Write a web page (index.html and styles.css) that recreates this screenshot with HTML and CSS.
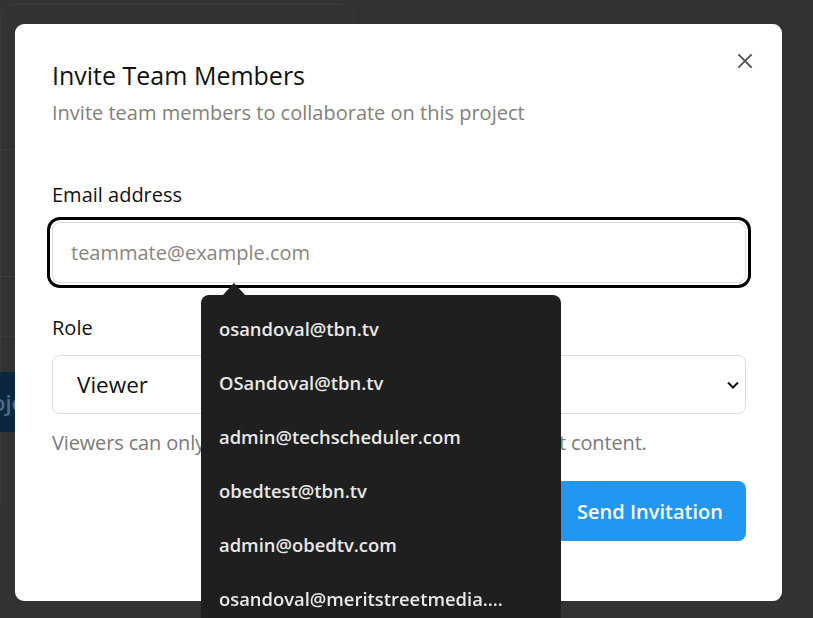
FILE: index.html
```html
<!DOCTYPE html>
<html lang="en">
<head>
<meta charset="utf-8">
<title>Invite Team Members</title>
<link rel="stylesheet" href="styles.css">
</head>
<body>
<div class="page">
  <div class="bg-card">
    <div class="bg-row bg-row-1"></div>
    <div class="bg-row bg-row-2"></div>
    <div class="bg-row bg-row-3"></div>
    <div class="bg-btn"><span>Projects</span></div>
  </div>
</div>

<div class="modal" role="dialog" aria-labelledby="invite-title">
  <button class="close" aria-label="Close">
    <svg width="16" height="16" viewBox="0 0 16 16"><path d="M2 2 L14 14 M14 2 L2 14" stroke="#555" stroke-width="1.8" fill="none" stroke-linecap="square"/></svg>
  </button>
  <h2 id="invite-title" class="title">Invite Team Members</h2>
  <p class="subtitle">Invite team members to collaborate on this project</p>

  <div class="field field-email">
    <label class="label" for="email">Email address</label>
    <input id="email" class="input focused" type="email" placeholder="teammate@example.com">
  </div>

  <div class="field field-role">
    <label class="label" for="role">Role</label>
    <div class="select">
      <span class="select-value">Viewer</span>
      <svg class="chevron" width="14" height="10" viewBox="0 0 14 10"><path d="M2 2.5 L7 7.5 L12 2.5" stroke="#111" stroke-width="2" fill="none"/></svg>
    </div>
    <p class="help">Viewers can only view the project details but cannot edit content.</p>
  </div>

  <div class="actions">
    <button class="btn btn-cancel">Cancel</button>
    <button class="btn btn-primary">Send Invitation</button>
  </div>
</div>

<div class="suggest">
  <div class="suggest-arrow"></div>
  <ul class="suggest-list">
    <li>osandoval@tbn.tv</li>
    <li>OSandoval@tbn.tv</li>
    <li>admin@techscheduler.com</li>
    <li>obedtest@tbn.tv</li>
    <li>admin@obedtv.com</li>
    <li>osandoval@meritstreetmedia.com</li>
  </ul>
</div>
</body>
</html>
```

FILE: styles.css
```css
* { box-sizing: border-box; }
html, body {
  margin: 0;
  height: 100%;
  overflow: hidden;
}
body {
  background: #323232;
  font-family: "Open Sans", "Noto Sans", sans-serif;
}

/* dimmed page behind the modal */
.page {
  padding-top: 4px;
}
.bg-card {
  width: 354px;
  height: 500px;
  border: 1px solid #3a3a3a;
  border-bottom: none;
  border-radius: 12px 12px 0 0;
  padding-top: 144px;
}
.bg-row {
  width: 100%;
  border-top: 1px solid #3d3d3d;
}
.bg-row-1 { height: 127px; }
.bg-row-2 { height: 60px; }
.bg-row-3 { height: 36px; border-top: 1px solid #393939; }
.bg-btn {
  width: 120px;
  height: 60px;
  margin-left: -40px;
  background: #0b2740;
  color: #4f6a86;
  font-size: 22px;
  font-weight: 600;
  display: flex;
  align-items: center;
  padding-left: 8px;
}

/* modal */
.modal {
  position: fixed;
  left: 15px;
  top: 24px;
  width: 767px;
  height: 577px;
  background: #fff;
  border-radius: 9px;
  padding: 35px 36px 0 37px;
  display: flex;
  flex-direction: column;
}
.close {
  position: absolute;
  right: 27px;
  top: 27px;
  width: 20px;
  height: 20px;
  padding: 0;
  border: 0;
  background: none;
  display: flex;
  align-items: center;
  justify-content: center;
}
.title {
  margin: 0;
  font-size: 25px;
  line-height: 32px;
  font-weight: 500;
  color: #111;
}
.subtitle {
  margin: 8px 0 0;
  font-size: 20px;
  line-height: 28px;
  color: #857f7a;
}
.field {
  display: flex;
  flex-direction: column;
}
.field-email { margin-top: 54px; }
.field-role { margin-top: 31px; }
.label {
  font-size: 20px;
  line-height: 28px;
  font-weight: 500;
  color: #111;
}
.input {
  margin-top: 13px;
  width: 694px;
  height: 61px;
  border: 1px solid #dcdcdc;
  border-radius: 8px;
  padding: 0 18px;
  font-family: inherit;
  font-size: 20px;
  color: #111;
}
.input::placeholder { color: #8a847f; }
.input.focused {
  outline: 3px solid #000;
  outline-offset: 2px;
}
.select {
  margin-top: 13px;
  width: 694px;
  height: 59px;
  border: 1px solid #dcdcdc;
  border-radius: 8px;
  padding: 0 5px 0 24px;
  display: flex;
  align-items: center;
  justify-content: space-between;
}
.select-value {
  font-size: 22.5px;
  color: #111;
}
.chevron { margin-top: 1px; }
.help {
  margin: 15px 0 0;
  font-size: 20px;
  line-height: 28px;
  color: #7a7a7a;
  letter-spacing: -0.15px;
}
.actions {
  margin-top: 24px;
  display: flex;
  justify-content: flex-end;
  gap: 12px;
}
.btn {
  height: 60px;
  border-radius: 8px;
  border: 0;
  font-family: inherit;
  font-size: 20px;
  font-weight: 600;
  padding: 0 24px;
}
.btn-cancel {
  background: #f1f1f1;
  color: #333;
}
.btn-primary {
  background: #2196f3;
  color: #fff;
  width: 192px;
  padding: 0;
}

/* autocomplete popup */
.suggest {
  position: fixed;
  left: 201px;
  top: 295px;
  width: 360px;
}
.suggest-arrow {
  position: absolute;
  left: 21px;
  top: -12px;
  width: 0;
  height: 0;
  border-left: 12px solid transparent;
  border-right: 12px solid transparent;
  border-bottom: 13px solid #1f1f1f;
}
.suggest-list {
  list-style: none;
  margin: 0;
  padding: 7px 0 0;
  background: #1f1f1f;
  border-radius: 8px 8px 0 0;
  height: 340px;
}
.suggest-list li {
  height: 54px;
  line-height: 54px;
  padding: 0 56px 0 18px;
  font-size: 18.4px;
  font-weight: 600;
  color: #e8e8e8;
  white-space: nowrap;
  overflow: hidden;
  text-overflow: ellipsis;
}
```
